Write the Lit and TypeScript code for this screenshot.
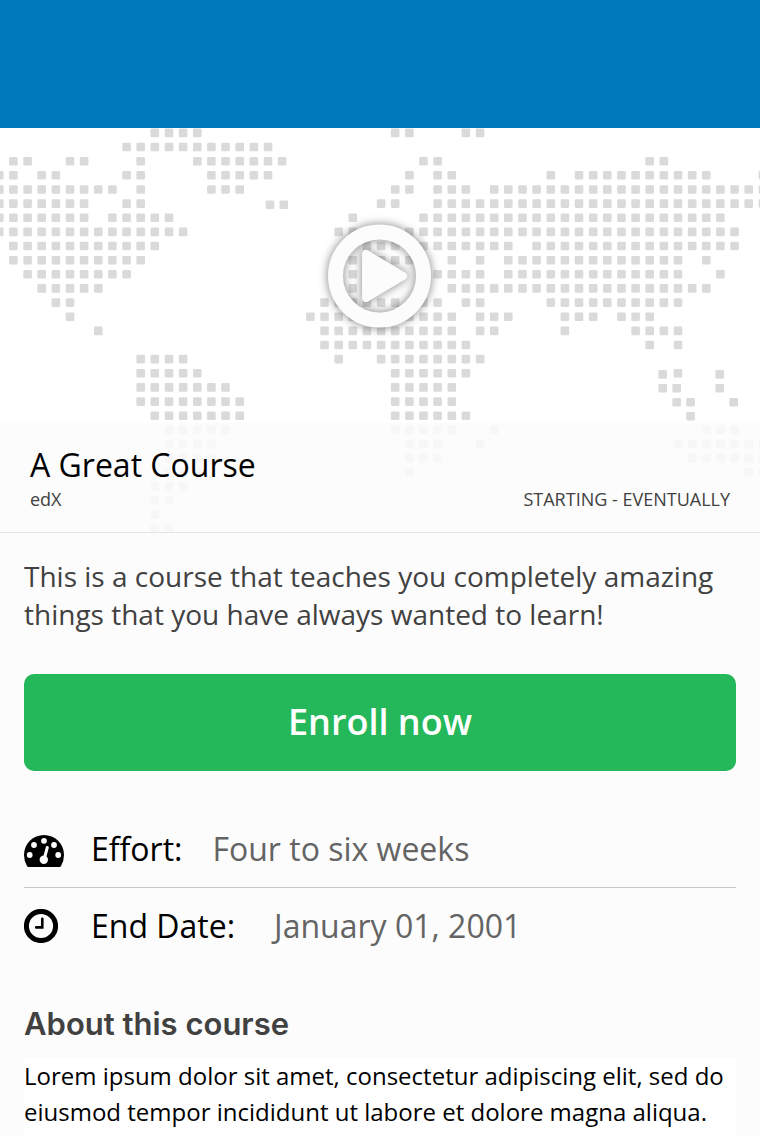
import { LitElement, html, css, svg } from "lit";
import { customElement } from "lit/decorators.js";

// Column spans of the dotted world map, one entry per row.
const MAP_ROWS: string[] = [
  "11-14 28-29 33-34",
  "9-19",
  "1-2 5-6 10 14-20 30-31 46-47",
  "0-1 3-4 9-10 15-19 29 31-32 39 41-50 54",
  "0-8 10 15-17 28-29 31-33 35-54",
  "0-6 9-10 27-28 31-54",
  "0-6 8-12 25 30-51",
  "0-13 24-52",
  "1-11 26-36 38-52",
  "1-10 25 27-29 32 34 36-48 50",
  "2-9 25 31-34 36-48 51",
  "3-7 25 32-49 50",
  "4-5 23-28 30-31 33-34 39-48",
  "5 22-32 34-36 40-42 44-46",
  "7 23-32 34-35 40 45-48",
  "23-33 46 48",
  "10-13 24 27-34",
  "10-14 28-33 48",
  "10-16 28-32",
  "10-17 28-32",
  "11-17 28-33",
  "12-16 28-32 35 50-52",
  "12-15 29-31 34 48-54",
  "12-15 29-31 49-54",
  "12-14 29 53-54",
  "11-13",
  "11-12",
  "11",
  "11-12",
];

// Islands that sit between the regular columns.
const ISLANDS: [number, number][] = [
  [270, 76.7], [283.8, 76.7],
  [662.7, 246.4], [719.7, 246.4],
  [662.7, 260.2], [676.7, 260.2], [719.7, 260.2],
  [676.7, 274.2], [690.6, 274.2], [733.7, 274.2],
  [690.6, 288.2],
];

const PITCH = 14.14;

function mapPath(): string {
  const dot = (x: number, y: number) =>
    `M${(x - 3).toFixed(1)} ${(y - 3).toFixed(1)}h6v6h-6z`;
  let d = "";
  MAP_ROWS.forEach((row, r) => {
    for (const span of row.split(" ")) {
      const [from, to = from] = span.split("-").map(Number);
      for (let c = from; c <= to; c++) d += dot(c * PITCH - 0.7, r * PITCH + 4.9);
    }
  });
  for (const [x, y] of ISLANDS) d += dot(x, y);
  return d;
}

const MAP_PATH = mapPath();

@customElement("course-map")
export class CourseMap extends LitElement {
  static styles = css`
    :host { display: block; overflow: hidden; }
    .map { display: block; width: 100%; height: 100%; }
  `;
  render() {
    return html`<svg class="map" viewBox="0 0 760 404" preserveAspectRatio="xMidYMid slice" aria-hidden="true">
      ${svg`<path d=${MAP_PATH} fill="#dadada" stroke="#dadada" stroke-width="2.600" stroke-linejoin="round"/>`}
    </svg>`;
  }
}

@customElement("app-root")
export class AppRoot extends LitElement {
  static styles = css`
    :host {
      display: flex;
      flex-direction: column;
      min-height: 100vh;
      background: #fcfcfc;
      color: #000;
      font-family: "Open Sans", "Noto Sans", sans-serif;
    }
    .bar { height: 128px; background: #0079bc; }
    .hero {
      display: grid;
      grid-template-rows: 295px auto;
      background: #fff;
      border-bottom: 1px solid #e5e5e5;
    }
    .backdrop { grid-area: 1 / 1 / 3 / 2; height: 404px; }
    .play {
      grid-area: 1 / 1;
      place-self: center;
      padding: 0;
      border: 0;
      border-radius: 50%;
      background: none;
      cursor: pointer;
    }
    .play svg {
      display: block;
      overflow: visible;
      filter: drop-shadow(0 0 5px rgba(0, 0, 0, 0.5));
    }
    .caption {
      grid-area: 2 / 1;
      box-sizing: border-box;
      padding: 20px 30px;
      background: rgba(252, 252, 252, 0.85);
    }
    .title { margin: 0; font-size: 32px; line-height: 44px; font-weight: 400; }
    .meta {
      display: flex;
      justify-content: space-between;
      color: #414141;
      font-size: 18px;
      line-height: 25px;
    }
    .meta span:last-child { text-transform: uppercase; }
    .content {
      flex: 1;
      display: flex;
      flex-direction: column;
      padding: 24px 24px 0;
    }
    .summary { margin: 0 0 41px; color: #414141; font-size: 28px; line-height: 38px; }
    .enroll {
      height: 97px;
      flex: none;
      padding: 0 0 2px;
      border: 0;
      border-radius: 10px;
      background: #25b85a;
      color: #fff;
      font: 600 36px/48px "Open Sans", "Noto Sans", sans-serif;
      cursor: pointer;
    }
    .facts { margin: 40px 0 0; font-size: 32px; line-height: 44px; }
    .fact { display: flex; align-items: center; height: 76px; }
    .fact + .fact { border-top: 1px solid #c8c8c8; }
    .icon { width: 67px; flex: none; }
    .icon svg { display: block; }
    .fact dt { margin-right: 30px; }
    .fact + .fact dt { margin-right: 39px; }
    .fact dd { margin: 0; color: #646464; }
    .about {
      margin: 40px 0 14px;
      color: #414141;
      font: 600 31px/40px Inter, "Open Sans", sans-serif;
    }
    .body { flex: 1; background: #fff; font-size: 24px; line-height: 36px; }
    .body p { margin: 0; }
  `;

  render() {
    return html`
      <header class="bar"></header>
      <section class="hero">
        <course-map class="backdrop"></course-map>
        <button class="play" type="button" aria-label="Play course video">
          <svg width="104" height="104" viewBox="0 0 104 104" aria-hidden="true">
            <circle cx="51.500" cy="52" r="44" fill="none" stroke="#fcfcfc" stroke-width="15" />
            <path d="M38 30 V74 L75 52Z" fill="#fcfcfc" stroke="#fcfcfc" stroke-width="8" stroke-linejoin="round" />
          </svg>
        </button>
        <div class="caption">
          <h1 class="title">A Great Course</h1>
          <div class="meta"><span>edX</span><span>Starting - Eventually</span></div>
        </div>
      </section>
      <main class="content">
        <p class="summary">This is a course that teaches you completely amazing things that you have always wanted to learn!</p>
        <button class="enroll" type="button">Enroll now</button>
        <dl class="facts">
          <div class="fact">
            <span class="icon">
              <svg width="40" height="36" viewBox="0 -4 40 36" aria-hidden="true">
                <path d="M20 0A20 20 0 0 0 0 20Q0 26 3 31Q3.500 32 4.500 32H35.500Q36.500 32 37 31Q40 26 40 20A20 20 0 0 0 20 0Z" />
                <g fill="#fcfcfc">
                  <circle cx="5.700" cy="20" r="2.900" />
                  <circle cx="10" cy="10" r="2.900" />
                  <circle cx="20" cy="5.800" r="2.900" />
                  <circle cx="30" cy="10" r="2.900" />
                  <circle cx="34.200" cy="20" r="2.900" />
                  <circle cx="19.800" cy="24.800" r="4.200" />
                </g>
                <path d="M20.500 23L23.300 12.500" stroke="#fcfcfc" stroke-width="3" stroke-linecap="round" />
              </svg>
            </span>
            <dt>Effort:</dt>
            <dd>Four to six weeks</dd>
          </div>
          <div class="fact">
            <span class="icon">
              <svg width="34" height="34" viewBox="0 0 34 34" fill="none" stroke="#000" aria-hidden="true">
                <circle cx="17" cy="17" r="14.600" stroke-width="5" />
                <path d="M18.300 9.800V18.400H12.200" stroke-width="2.600" stroke-linecap="round" />
              </svg>
            </span>
            <dt>End Date:</dt>
            <dd>January 01, 2001</dd>
          </div>
        </dl>
        <h2 class="about">About this course</h2>
        <div class="body">
          <p>Lorem ipsum dolor sit amet, consectetur adipiscing elit, sed do eiusmod tempor incididunt ut labore et dolore magna aliqua.</p>
        </div>
      </main>
    `;
  }
}
